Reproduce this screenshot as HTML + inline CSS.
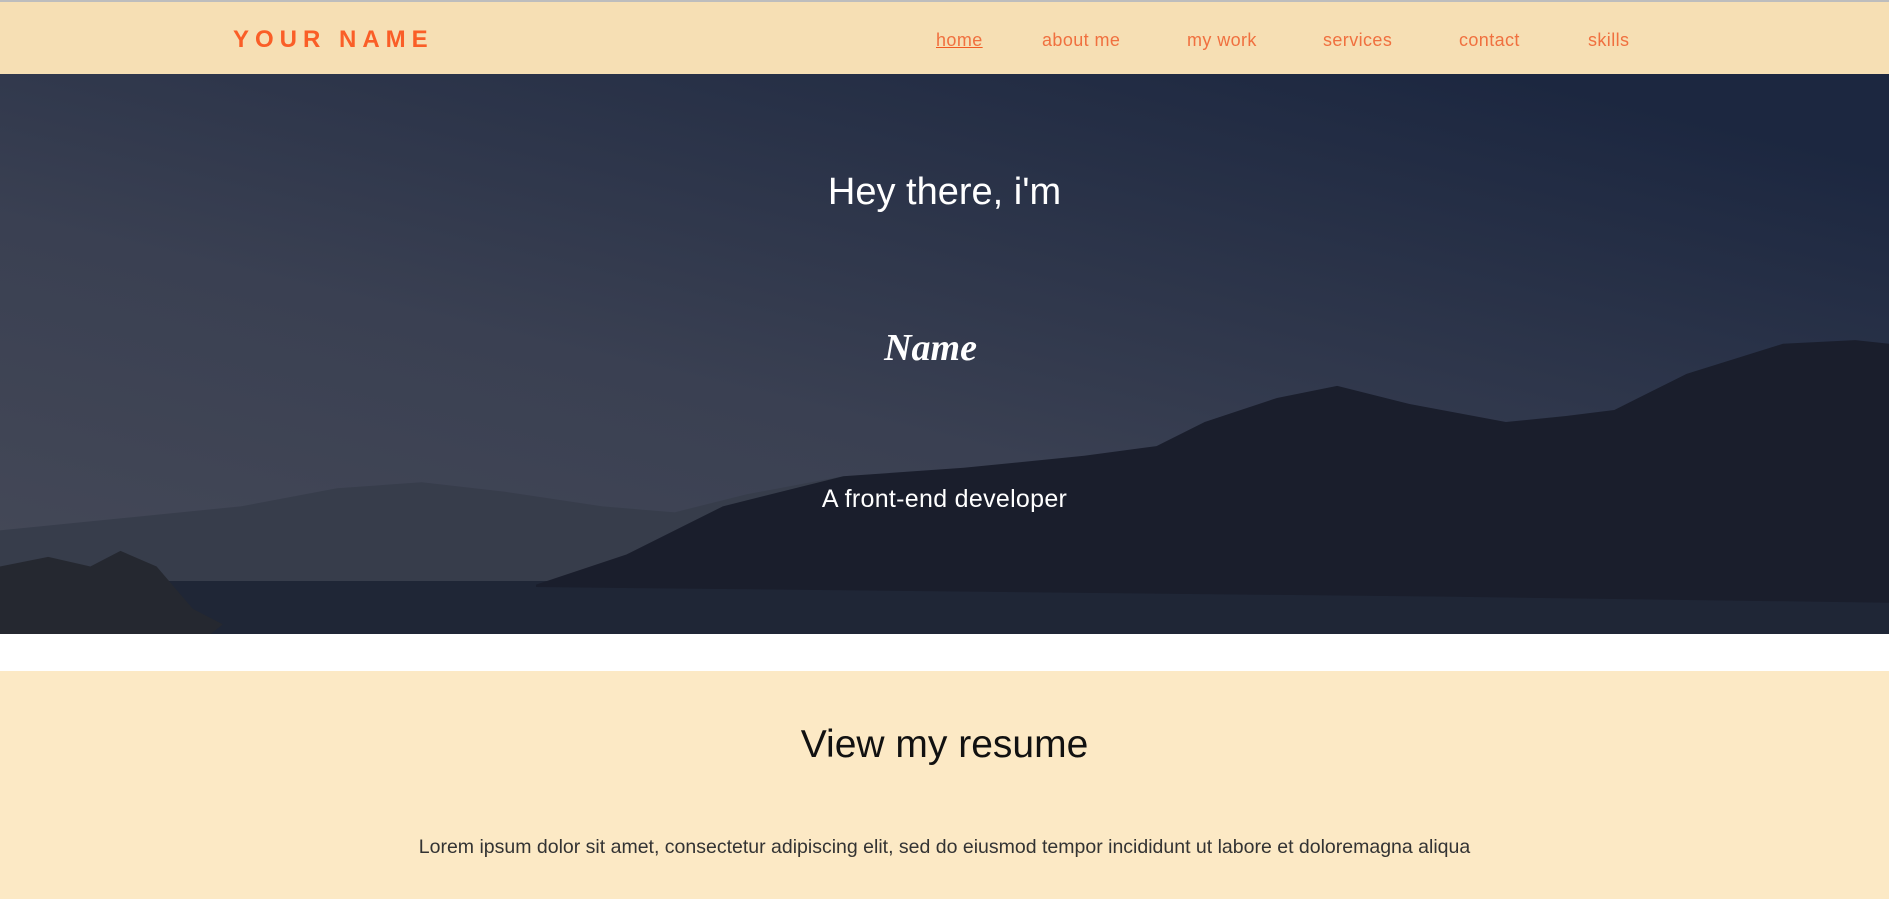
<!DOCTYPE html>
<html><head><meta charset="utf-8"><style>
*{margin:0;padding:0;box-sizing:border-box}
body{width:1889px;height:899px;overflow:hidden;background:#fff;font-family:"Liberation Sans",sans-serif}
.top{position:absolute;left:0;top:0;width:1889px;height:2px;background:#bdbdbd}
header{position:absolute;left:0;top:2px;width:1889px;height:72px;background:#f6dfb4}
.logo{position:absolute;left:233px;top:24px;font-size:24px;letter-spacing:6px;color:#fa5e27;font-weight:bold}
nav a{position:absolute;top:28px;font-size:18px;color:#f0703f;text-decoration:none;letter-spacing:0.4px}
nav a.h{text-decoration:underline;text-decoration-color:#f25a22}
.hero{position:absolute;left:0;top:74px;width:1889px;height:560px;overflow:hidden}
.t{position:absolute;left:0;width:1889px;text-align:center;color:#fff}
.sec{position:absolute;left:0;top:671px;width:1889px;height:228px;background:#fce9c5}
</style></head><body>
<div class="top"></div>
<header>
<div class="logo">YOUR NAME</div>
<nav>
<a class="h" style="left:936px">home</a>
<a style="left:1042px">about me</a>
<a style="left:1187px">my work</a>
<a style="left:1323px">services</a>
<a style="left:1459px">contact</a>
<a style="left:1588px">skills</a>
</nav>
</header>
<div class="hero">
<svg width="1889" height="560" viewBox="0 61 1568 465" preserveAspectRatio="none">
<defs>
<linearGradient id="sky" x1="0" y1="1" x2="0.8" y2="0">
<stop offset="0" stop-color="#464a58"/><stop offset="0.45" stop-color="#3a4052"/><stop offset="1" stop-color="#1c2740"/>
</linearGradient>
</defs>
<rect x="0" y="61" width="1568" height="465" fill="url(#sky)"/>
<path d="M0,440 L100,430 L200,420 L280,405 L350,400 L420,408 L500,420 L560,425 L620,410 L700,395 L780,390 L800,400 L700,460 L600,485 L0,485 Z" fill="#373d4b"/>
<rect x="0" y="482" width="1568" height="44" fill="#1f2636"/>
<path d="M445,485 L520,460 L600,420 L700,395 L800,388 L900,378 L960,370 L1000,350 L1060,330 L1110,320 L1170,335 L1250,350 L1300,345 L1340,340 L1400,310 L1480,285 L1540,282 L1568,285 L1568,500 L1200,495 L445,487 Z" fill="#1a1e2c"/>
<path d="M0,470 L40,462 L75,470 L100,457 L130,470 L160,505 L185,518 L175,526 L0,526 Z" fill="#252830"/>
</svg>
<div class="t" style="top:97px;font-size:38px;font-family:'Liberation Sans',sans-serif">Hey there, i'm</div>
<div class="t" style="top:252px;font-size:38px;font-family:'Liberation Serif',serif;font-style:italic;font-weight:bold;margin-left:-14px">Name</div>
<div class="t" style="top:411px;font-size:25px;font-family:'Liberation Sans',sans-serif;letter-spacing:0.3px">A front-end developer</div>
</div>
<div class="sec">
<div class="t" style="top:52px;color:#111;font-size:39px;font-family:'Liberation Sans',sans-serif">View my resume</div>
<div class="t" style="top:165px;color:#333;font-size:19.5px">Lorem ipsum dolor sit amet, consectetur adipiscing elit, sed do eiusmod tempor incididunt ut labore et doloremagna aliqua</div>
</div>
</body></html>
